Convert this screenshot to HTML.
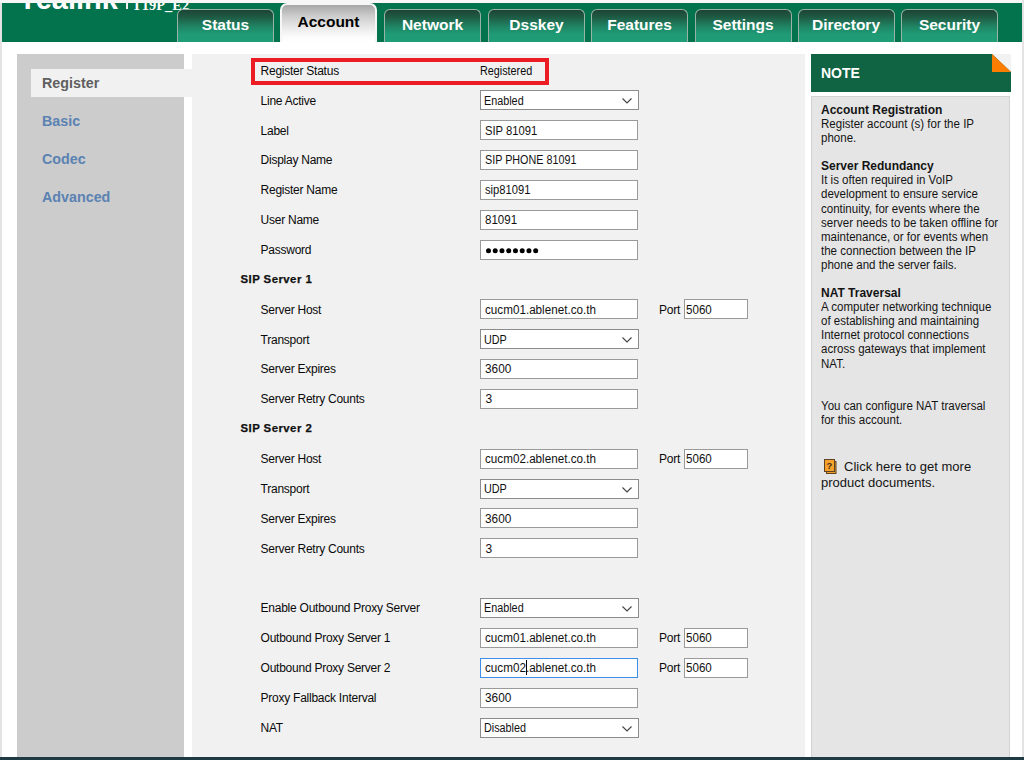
<!DOCTYPE html><html><head><meta charset="utf-8"><style>
*{margin:0;padding:0;box-sizing:border-box}
html,body{width:1024px;height:760px;overflow:hidden;background:#fff;font-family:"Liberation Sans", sans-serif;}
.a{position:absolute}
.hdr{position:absolute;left:2px;top:3px;width:1019.5px;height:39px;background:#03734d;overflow:hidden}
.tab{position:absolute;top:5.5px;width:97px;height:34px;border:1.5px solid #9bb3a7;border-bottom:none;border-radius:6px 6px 0 0;
 background:linear-gradient(#1c4434 0%,#1f5b45 22%,#1f8463 50%,#1f9a74 72%,#1f9e77 100%);color:#fff;font-weight:bold;font-size:15.5px;text-align:center;line-height:30px}
.tab.on{top:0px;height:39px;border:2px solid #f6f6f6;border-bottom:none;border-radius:7px 7px 0 0;background:linear-gradient(#a6a6a6 0%,#cdcdcd 30%,#ececec 65%,#fbfbfb 85%,#fff 100%);color:#000;line-height:33px}
.lbl{position:absolute;left:260.6px;font-size:12px;letter-spacing:-0.25px;color:#0a0a0a;line-height:14px;white-space:nowrap}
.hd{position:absolute;left:240.5px;font-size:11.4px;font-weight:bold;letter-spacing:0.45px;color:#111;line-height:14px;white-space:nowrap;-webkit-text-stroke:0.25px #111}
.inp{position:absolute;left:480px;width:158px;height:20px;background:#fff;border:1px solid #9a9a9a;font-size:12px;letter-spacing:-0.15px;color:#111;line-height:19px;padding-left:4.4px;white-space:nowrap;overflow:hidden}
.sel{position:absolute;left:480px;width:159px;height:20px;background:#fff;border:1px solid #8c8c8c;font-size:11.2px;color:#111;line-height:20px;padding-left:3.8px;white-space:nowrap}
.sel svg{position:absolute;right:6px;top:7px}
.ft{position:absolute;font-size:12px;color:#111;line-height:14px;white-space:nowrap}
.port{position:absolute;left:659px;font-size:12px;letter-spacing:-0.25px;color:#0a0a0a;line-height:14px}
.pin{position:absolute;left:684px;width:64px;height:20px;background:#fff;border:1px solid #9a9a9a;font-size:12px;letter-spacing:-0.2px;color:#111;line-height:19px;padding-left:1px}
.note{position:absolute;left:821px;font-size:11.5px;line-height:14px;color:#141414;white-space:nowrap}
</style></head><body><div class="a" style="left:0;top:0;width:1024px;height:3px;background:#f6f6f6"></div>
<div class="a" style="left:0;top:3px;width:2px;height:757px;background:#e3e3e3"></div>
<div class="a" style="left:1022px;top:0;width:2px;height:760px;background:#e3e3e3"></div>
<div class="a" style="left:0;top:757px;width:1024px;height:3px;background:#1f3a42"></div>
<div class="hdr">
<div class="a" style="left:16px;top:-21.3px;font-size:29px;font-weight:bold;color:#fff;line-height:34px">Yealink</div>
<div class="a" style="left:123.5px;top:-2px;width:2px;height:8px;background:#f2f2f2"></div>
<div class="a" style="left:130px;top:-5px;font-family:'Liberation Serif',serif;font-weight:bold;font-size:14.5px;color:#fff;line-height:14px">T19P_E2</div>
<div class="tab" style="left:175px">Status</div>
<div class="tab on" style="left:278px">Account</div>
<div class="tab" style="left:382px">Network</div>
<div class="tab" style="left:486px">Dsskey</div>
<div class="tab" style="left:589px">Features</div>
<div class="tab" style="left:692.5px">Settings</div>
<div class="tab" style="left:795.5px">Directory</div>
<div class="tab" style="left:899px">Security</div>
</div>
<div class="a" style="left:17px;top:54px;width:167px;height:703px;background:#cccccc"></div>
<div class="a" style="left:192px;top:54px;width:613px;height:703px;background:#f1f1f1"></div>
<div class="a" style="left:31px;top:69px;width:162px;height:28px;background:#f1f1f1"></div>
<div class="a" style="left:42px;top:74.70px;font-size:14.3px;font-weight:bold;color:#5f5f5f;line-height:17px">Register</div>
<div class="a" style="left:42px;top:112.50px;font-size:14.3px;font-weight:bold;color:#5a82b2;line-height:17px">Basic</div>
<div class="a" style="left:42px;top:150.50px;font-size:14.3px;font-weight:bold;color:#5a82b2;line-height:17px">Codec</div>
<div class="a" style="left:42px;top:188.50px;font-size:14.3px;font-weight:bold;color:#5a82b2;line-height:17px">Advanced</div>
<div class="a" style="left:811px;top:54px;width:200px;height:38px;background:#106443"></div>
<svg class="a" style="left:992px;top:54px" width="19" height="18"><polygon points="0,0 19,18 19,0" fill="#f2f2f2"/><polygon points="0,0 0,18 19,18" fill="#fc7d00"/></svg>
<div class="a" style="left:821px;top:65px;font-size:14px;font-weight:bold;color:#fff;line-height:16px">NOTE</div>
<div class="a" style="left:811px;top:96px;width:199px;height:661px;background:#e5e5e5;border:1px solid #d2d2d2;border-bottom:none"></div>
<div class="lbl" style="top:64px">Register Status</div>
<div class="ft" style="left:480px;top:64px;transform:scaleX(0.9);transform-origin:0 0;color:#0a0a0a">Registered</div>
<div class="lbl" style="top:94px">Line Active</div>
<div class="sel" style="top:90px"><svg width="10" height="6"><polyline points="0.5,0.5 5,5 9.5,0.5" fill="none" stroke="#444" stroke-width="1.15"/></svg></div>
<div class="ft" style="left:484px;top:94px;transform:scaleX(0.9);transform-origin:0 0">Enabled</div>
<div class="lbl" style="top:124px">Label</div>
<div class="inp" style="top:120px"></div>
<div class="ft" style="left:485.4px;top:124px;transform:scaleX(0.937);transform-origin:0 0">SIP 81091</div>
<div class="lbl" style="top:153px">Display Name</div>
<div class="inp" style="top:150px"></div>
<div class="ft" style="left:485.4px;top:153px;transform:scaleX(0.8975);transform-origin:0 0">SIP PHONE 81091</div>
<div class="lbl" style="top:183px">Register Name</div>
<div class="inp" style="top:180px"></div>
<div class="ft" style="left:485.4px;top:183px;transform:scaleX(0.932);transform-origin:0 0">sip81091</div>
<div class="lbl" style="top:213px">User Name</div>
<div class="inp" style="top:210px"></div>
<div class="ft" style="left:485.4px;top:213px;transform:scaleX(0.96);transform-origin:0 0">81091</div>
<div class="lbl" style="top:243px">Password</div>
<div class="inp" style="top:240px"><svg class="a" style="left:0;top:0" width="156" height="18"><circle cx="7.50" cy="9.8" r="2.5" fill="#000"/><circle cx="14.24" cy="9.8" r="2.5" fill="#000"/><circle cx="20.98" cy="9.8" r="2.5" fill="#000"/><circle cx="27.72" cy="9.8" r="2.5" fill="#000"/><circle cx="34.46" cy="9.8" r="2.5" fill="#000"/><circle cx="41.20" cy="9.8" r="2.5" fill="#000"/><circle cx="47.94" cy="9.8" r="2.5" fill="#000"/><circle cx="54.68" cy="9.8" r="2.5" fill="#000"/></svg></div>
<div class="hd" style="top:272px">SIP Server 1</div>
<div class="lbl" style="top:303px">Server Host</div>
<div class="inp" style="top:299px;"></div>
<div class="ft" style="left:485.4px;top:303px;transform:scaleX(0.973);transform-origin:0 0">cucm01.ablenet.co.th</div>
<div class="port" style="top:303px">Port</div>
<div class="pin" style="top:299px"></div>
<div class="ft" style="left:685.5px;top:303px;transform:scaleX(0.966);transform-origin:0 0">5060</div>
<div class="lbl" style="top:333px">Transport</div>
<div class="sel" style="top:329px"><svg width="10" height="6"><polyline points="0.5,0.5 5,5 9.5,0.5" fill="none" stroke="#444" stroke-width="1.15"/></svg></div>
<div class="ft" style="left:484px;top:333px;transform:scaleX(0.9);transform-origin:0 0">UDP</div>
<div class="lbl" style="top:362px">Server Expires</div>
<div class="inp" style="top:359px"></div>
<div class="ft" style="left:485.4px;top:362px;transform:scaleX(0.985);transform-origin:0 0">3600</div>
<div class="lbl" style="top:392px">Server Retry Counts</div>
<div class="inp" style="top:389px"></div>
<div class="ft" style="left:485.4px;top:392px;transform:scaleX(1);transform-origin:0 0">3</div>
<div class="hd" style="top:421px">SIP Server 2</div>
<div class="lbl" style="top:452px">Server Host</div>
<div class="inp" style="top:449px;"></div>
<div class="ft" style="left:485.4px;top:452px;transform:scaleX(0.973);transform-origin:0 0">cucm02.ablenet.co.th</div>
<div class="port" style="top:452px">Port</div>
<div class="pin" style="top:449px"></div>
<div class="ft" style="left:685.5px;top:452px;transform:scaleX(0.966);transform-origin:0 0">5060</div>
<div class="lbl" style="top:482px">Transport</div>
<div class="sel" style="top:479px"><svg width="10" height="6"><polyline points="0.5,0.5 5,5 9.5,0.5" fill="none" stroke="#444" stroke-width="1.15"/></svg></div>
<div class="ft" style="left:484px;top:482px;transform:scaleX(0.9);transform-origin:0 0">UDP</div>
<div class="lbl" style="top:512px">Server Expires</div>
<div class="inp" style="top:508px"></div>
<div class="ft" style="left:485.4px;top:512px;transform:scaleX(0.985);transform-origin:0 0">3600</div>
<div class="lbl" style="top:542px">Server Retry Counts</div>
<div class="inp" style="top:538px"></div>
<div class="ft" style="left:485.4px;top:542px;transform:scaleX(1);transform-origin:0 0">3</div>
<div class="lbl" style="top:601px">Enable Outbound Proxy Server</div>
<div class="sel" style="top:598px"><svg width="10" height="6"><polyline points="0.5,0.5 5,5 9.5,0.5" fill="none" stroke="#444" stroke-width="1.15"/></svg></div>
<div class="ft" style="left:484px;top:601px;transform:scaleX(0.9);transform-origin:0 0">Enabled</div>
<div class="lbl" style="top:631px">Outbound Proxy Server 1</div>
<div class="inp" style="top:628px;"></div>
<div class="ft" style="left:485.4px;top:631px;transform:scaleX(0.973);transform-origin:0 0">cucm01.ablenet.co.th</div>
<div class="port" style="top:631px">Port</div>
<div class="pin" style="top:628px"></div>
<div class="ft" style="left:685.5px;top:631px;transform:scaleX(0.966);transform-origin:0 0">5060</div>
<div class="lbl" style="top:661px">Outbound Proxy Server 2</div>
<div class="inp" style="top:658px;border-color:#3d8ee6;"></div>
<div class="ft" style="left:485.4px;top:661px;transform:scaleX(0.973);transform-origin:0 0">cucm02.ablenet.co.th</div>
<div class="a" style="left:526px;top:660px;width:1px;height:15px;background:#000"></div>
<div class="port" style="top:661px">Port</div>
<div class="pin" style="top:658px"></div>
<div class="ft" style="left:685.5px;top:661px;transform:scaleX(0.966);transform-origin:0 0">5060</div>
<div class="lbl" style="top:691px">Proxy Fallback Interval</div>
<div class="inp" style="top:688px"></div>
<div class="ft" style="left:485.4px;top:691px;transform:scaleX(0.985);transform-origin:0 0">3600</div>
<div class="lbl" style="top:721px">NAT</div>
<div class="sel" style="top:718px"><svg width="10" height="6"><polyline points="0.5,0.5 5,5 9.5,0.5" fill="none" stroke="#444" stroke-width="1.15"/></svg></div>
<div class="ft" style="left:484px;top:721px;transform:scaleX(0.9);transform-origin:0 0">Disabled</div>
<div class="a" style="left:251px;top:58px;width:298px;height:27px;border:4px solid #ec1c24"></div>
<div class="note" style="top:103px;font-size:12px"><b>Account Registration</b></div>
<div class="note" style="top:117px;font-size:12px;transform:scaleX(0.96);transform-origin:0 0">Register account (s) for the IP</div>
<div class="note" style="top:131px;font-size:12px;transform:scaleX(0.96);transform-origin:0 0">phone.</div>
<div class="note" style="top:159px;font-size:12px"><b>Server Redundancy</b></div>
<div class="note" style="top:173px;font-size:12px;transform:scaleX(0.96);transform-origin:0 0">It is often required in VoIP</div>
<div class="note" style="top:187px;font-size:12px;transform:scaleX(0.96);transform-origin:0 0">development to ensure service</div>
<div class="note" style="top:202px;font-size:12px;transform:scaleX(0.96);transform-origin:0 0">continuity, for events where the</div>
<div class="note" style="top:216px;font-size:12px;transform:scaleX(0.96);transform-origin:0 0">server needs to be taken offline for</div>
<div class="note" style="top:230px;font-size:12px;transform:scaleX(0.96);transform-origin:0 0">maintenance, or for events when</div>
<div class="note" style="top:244px;font-size:12px;transform:scaleX(0.96);transform-origin:0 0">the connection between the IP</div>
<div class="note" style="top:258px;font-size:12px;transform:scaleX(0.96);transform-origin:0 0">phone and the server fails.</div>
<div class="note" style="top:286px;font-size:12px"><b>NAT Traversal</b></div>
<div class="note" style="top:300px;font-size:12px;transform:scaleX(0.96);transform-origin:0 0">A computer networking technique</div>
<div class="note" style="top:314px;font-size:12px;transform:scaleX(0.96);transform-origin:0 0">of establishing and maintaining</div>
<div class="note" style="top:328px;font-size:12px;transform:scaleX(0.96);transform-origin:0 0">Internet protocol connections</div>
<div class="note" style="top:342px;font-size:12px;transform:scaleX(0.96);transform-origin:0 0">across gateways that implement</div>
<div class="note" style="top:357px;font-size:12px;transform:scaleX(0.96);transform-origin:0 0">NAT.</div>
<div class="note" style="top:399px;font-size:12px;transform:scaleX(0.96);transform-origin:0 0">You can configure NAT traversal</div>
<div class="note" style="top:413px;font-size:12px;transform:scaleX(0.96);transform-origin:0 0">for this account.</div>
<div class="note" style="left:844px;top:458.5px;font-size:13px;line-height:16px">Click here to get more</div>
<div class="note" style="left:821px;top:474.5px;font-size:13px;line-height:16px">product documents.</div>
<svg class="a" style="left:823px;top:458px" width="16" height="17"><rect x="3.5" y="3.5" width="9.5" height="12" fill="#f39c2a" stroke="#5c4424"/><rect x="1.5" y="1.5" width="10" height="12" fill="#f8a12c" stroke="#5c4424"/><text x="6.5" y="11" font-size="9.5" font-weight="bold" text-anchor="middle" fill="#3c2c1c" font-family="Liberation Sans">?</text></svg></body></html>
